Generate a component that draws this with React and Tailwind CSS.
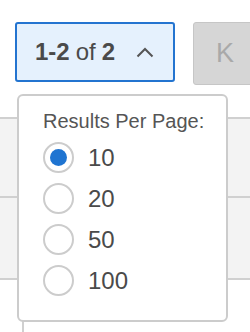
import { useState } from 'react'

const options = [10, 20, 50, 100]

function Radio({ checked }) {
  return (
    <span className="flex h-[31px] w-[31px] shrink-0 items-center justify-center rounded-full border-2 border-[#cccccc] bg-white">
      {checked && <span className="h-[17px] w-[17px] rounded-full bg-[#1f74d1]" />}
    </span>
  )
}

export default function App() {
  const [perPage, setPerPage] = useState(10)

  return (
    <div className="relative h-[332px] w-[250px] overflow-hidden bg-white font-['Liberation_Sans',Arial,sans-serif] text-[#4a4a4a]">
      <div className="flex items-start gap-[18px] pl-[15px] pt-[22px]">
        <button className="flex h-[60px] w-[160px] shrink-0 items-center rounded-[3px] border-2 border-[#2374d0] bg-[#e5f1fd] pl-[18px] text-[24px] leading-none text-[#4a4a4a]">
          <span className="font-bold">1-2</span>
          <span className="ml-[6px]">of</span>
          <span className="ml-[6px] font-bold">2</span>
          <svg width="18" height="11" viewBox="0 0 18 11" className="ml-[21px]" fill="none" stroke="#555" strokeWidth="2">
            <path d="M1.5 9.5 L9 2 L16.5 9.5" />
          </svg>
        </button>
        <button className="flex h-[63px] w-[62px] shrink-0 items-center rounded-[3px] border border-[#c6c6c6] bg-[#d6d6d6] pl-[22px] text-[27px] leading-none text-[#a9a9a9]">
          K
        </button>
      </div>

      <div className="mt-[32px] border-t-2 border-[#d0d0d0]">
        <div className="h-[79px] border-b-2 border-[#d0d0d0] bg-[#f3f3f3]" />
        <div className="h-[82px] border-b-2 border-[#d0d0d0] bg-[#f3f3f3]" />
        <div className="ml-[22px] mt-[38px] h-[20px] border-l-2 border-[#d0d0d0]" />
      </div>

      <div className="absolute left-[17px] top-[94px] h-[228px] w-[211px] rounded-[6px] border-2 border-[#cccccc] bg-white pl-[24px] pt-[14px]">
        <p className="text-[20px] leading-[23px] text-[#555555]">Results Per Page:</p>
        <div className="mt-[9px] flex flex-col gap-[10px]">
          {options.map(n => (
            <label key={n} onClick={() => setPerPage(n)} className="flex h-[31px] cursor-pointer items-center gap-[14px]">
              <Radio checked={perPage === n} />
              <span className="text-[24px] leading-none text-[#4a4a4a]">{n}</span>
            </label>
          ))}
        </div>
      </div>
    </div>
  )
}
